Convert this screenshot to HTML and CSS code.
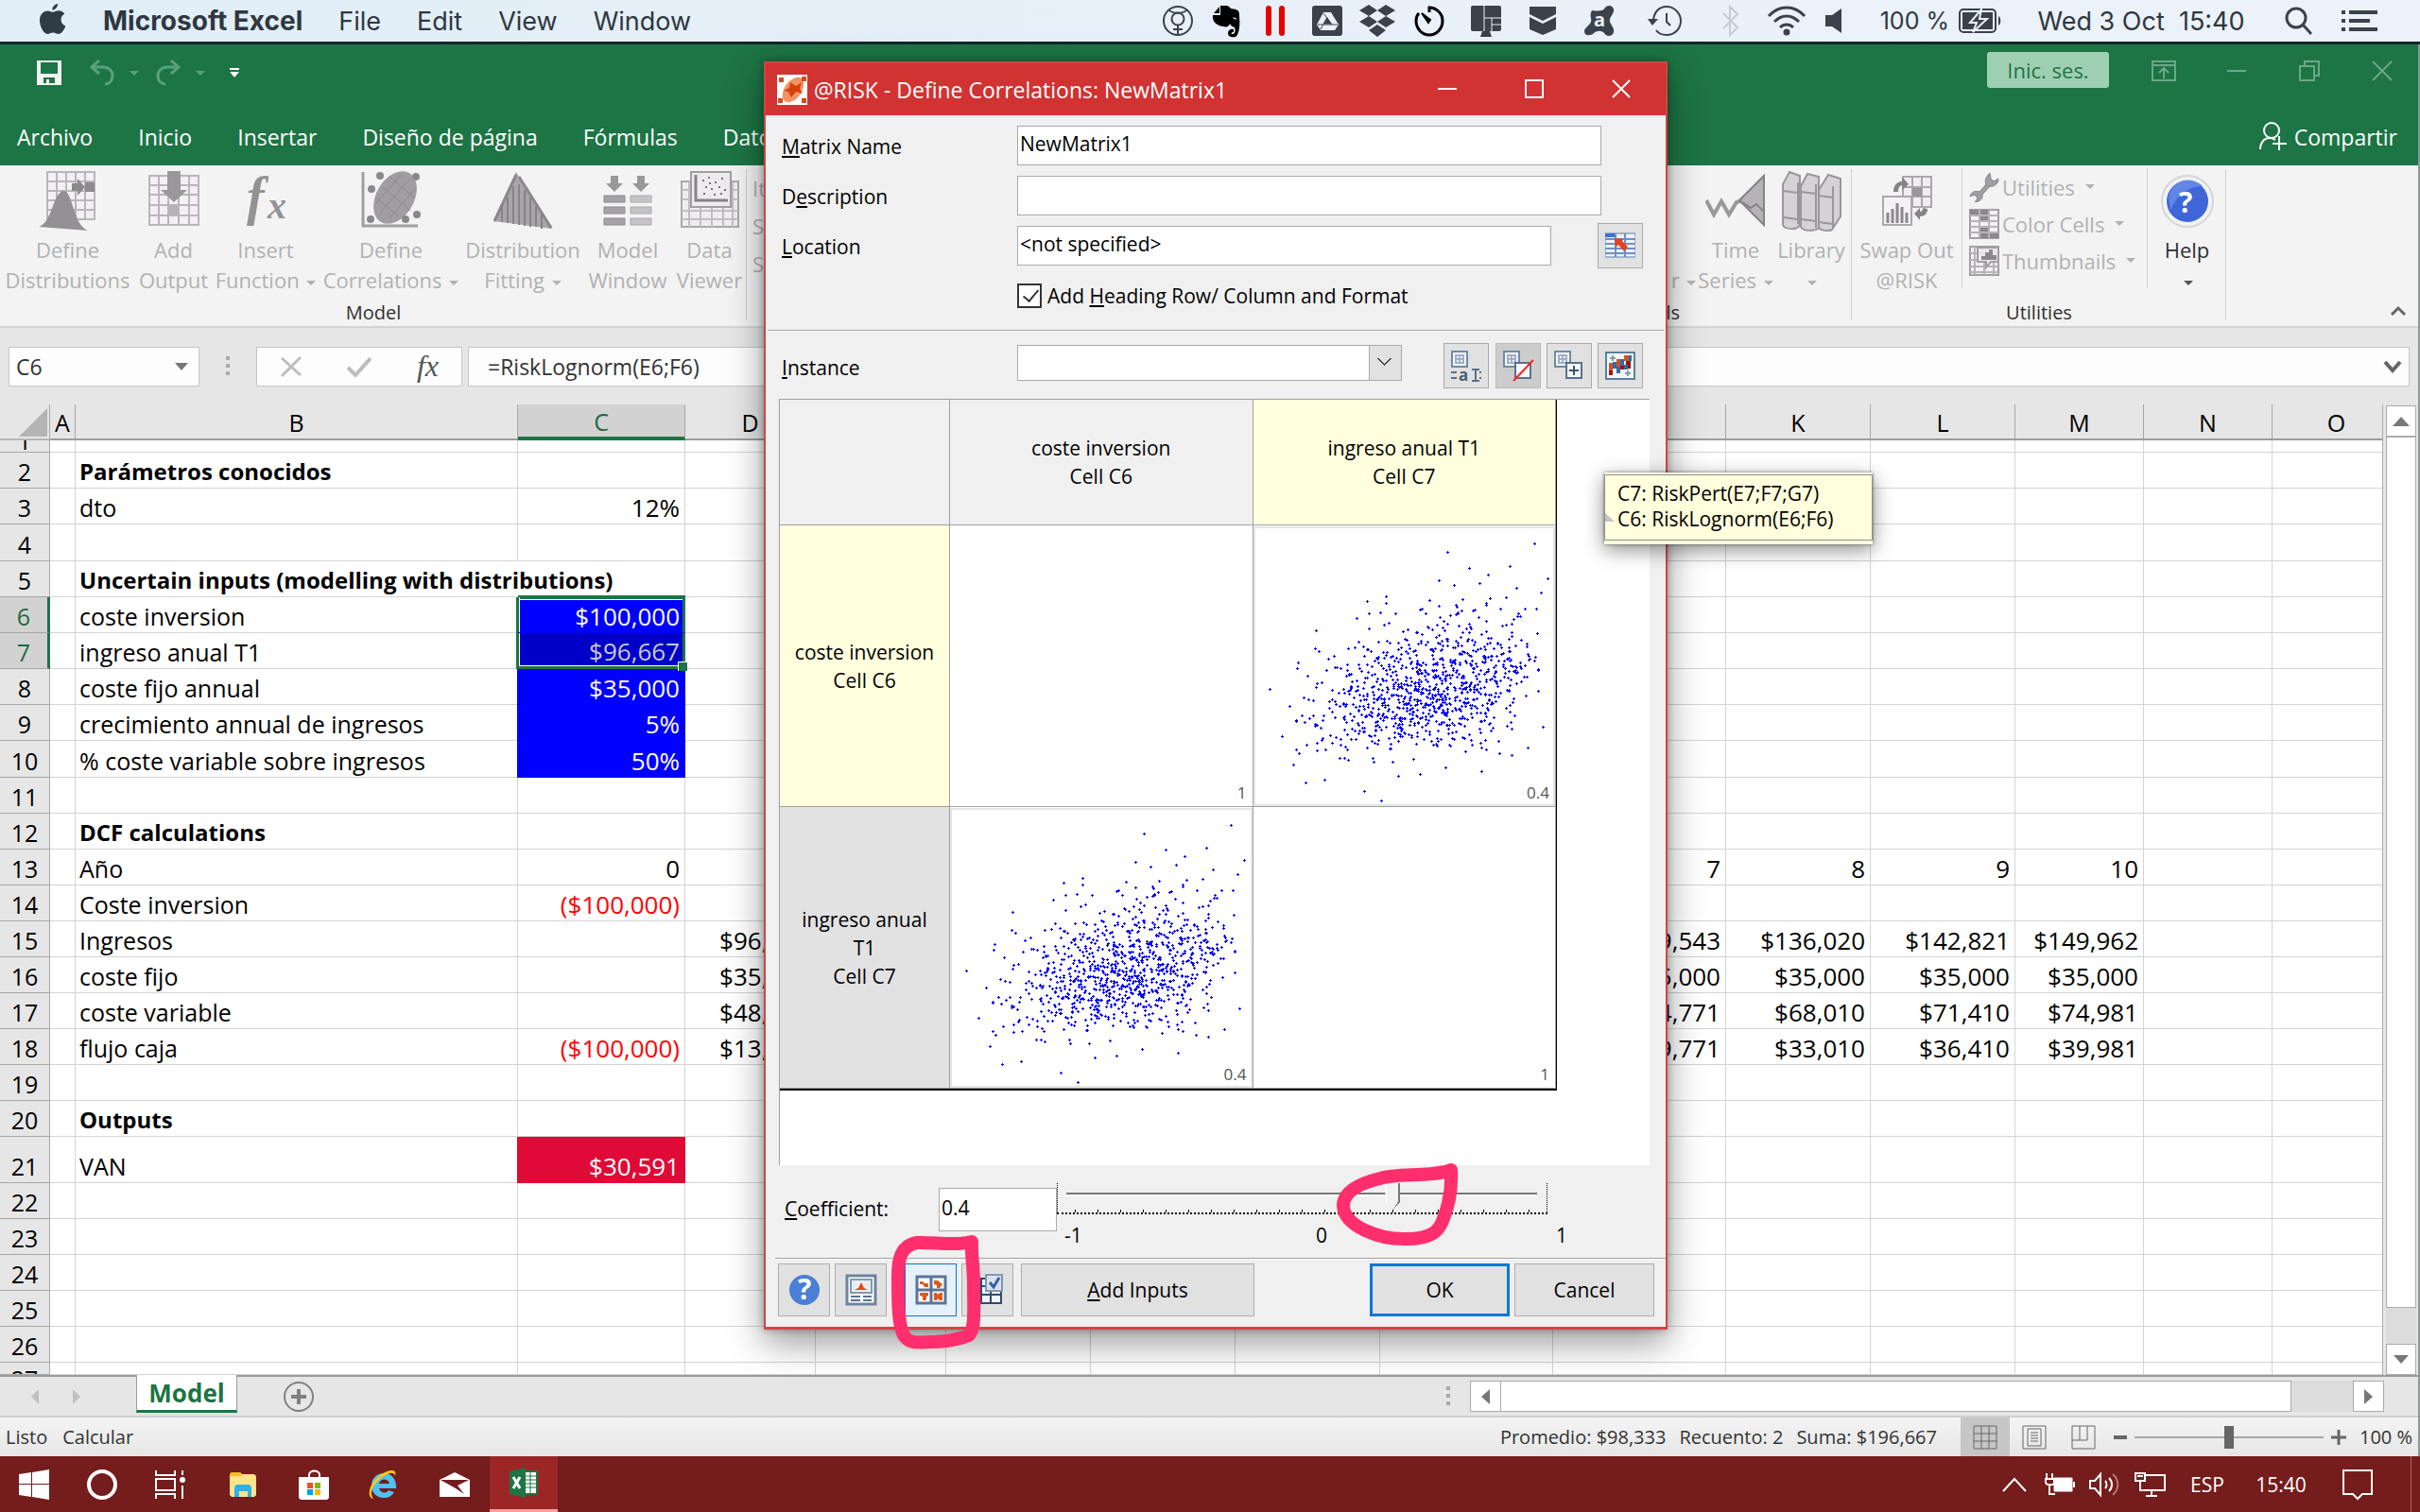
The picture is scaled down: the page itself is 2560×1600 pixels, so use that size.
FILE: index.html
```html
<!DOCTYPE html>
<html lang="es">
<head>
<meta charset="utf-8">
<title>Microsoft Excel</title>
<link rel="stylesheet" href="styles.css">
</head>
<body>
<header class="menubar">
  <nav class="menus">
    <svg class="apple" width="28" height="34" viewBox="0 0 28 34"><path d="M19 1c.3 3-2.500 6.500-5.600 6.600C13 4.600 16 1.500 19 1zM14 9.800c1.500 0 3-1.600 6-1.600 2.600 0 5 1.400 6.300 3.400-5.600 3.300-4.600 10.800 1 13C25.500 29.500 23 33 20 33c-2.500 0-3.300-1.400-6-1.400S10.500 33 8.200 33C4 33 0 25 0 18.600 0 12 4 8.400 8.300 8.400c2.500 0 4.300 1.400 5.700 1.400z" fill="#2f3b45"/></svg>
    <b>Microsoft Excel</b><span>File</span><span>Edit</span><span>View</span><span>Window</span>
  </nav>
  <div class="extras">
    <svg width="34" height="34" viewBox="0 0 34 34" fill="none" stroke="#3a424b" stroke-width="2"><circle cx="17" cy="17" r="15"/><circle cx="17" cy="15" r="6.500"/><path d="M7 5c4 5 16 5 20 0M17 22v10M12 26h10"/></svg>
    <svg width="30" height="36" viewBox="0 0 30 36"><path d="M9 2h6c3 0 4 2 5 3 8 1 9 2 9 8 1 8 0 20-4 22-4 1-8 0-8-4 0-3 3-5 6-4v3c-3 0-3 2-1 2 3 0 3-5 2-7-3-1-4-2-5-4-1 3-3 4-7 3C4 23 0 18 1 12h8z" fill="#000"/><path d="M2 10l6-7v7z" fill="#000"/><path d="M22 15c2-1 4 0 4 2z" fill="#e8f0f8"/></svg>
    <svg width="22" height="34" viewBox="0 0 22 34"><rect x="1" y="1" width="6" height="32" rx="3" fill="#e60000"/><rect x="15" y="1" width="6" height="32" rx="3" fill="#e60000"/></svg>
    <svg width="32" height="34" viewBox="0 0 32 34"><rect y="1" width="32" height="32" rx="3" fill="#3a424b"/><path d="M12 8h8l8 13-4 6H9l-4-6z" fill="#e8f0f8"/><path d="M16 14l4 6h-7zM12 9l9 12M6 21h21M16 13L9 26" fill="#3a424b" stroke="#3a424b"/></svg>
    <svg width="38" height="34" viewBox="0 0 38 34" fill="#3a424b"><path d="M10 0l9 6-9 6-10-6zM28 0l10 6-10 6-9-6zM10 12l9 6-9 6-10-6zM28 12l10 6-10 6-9-6zM19 21l9 6-9 7-9-7z"/></svg>
    <svg width="32" height="34" viewBox="0 0 32 34" fill="none" stroke="#000" stroke-width="3"><path d="M16 8V3c7 0 14 6 14 14s-6 15-14 15S2 25 2 17c0-3 1-6 3-8"/><path d="M8 9l9 7-2 3z" fill="#000" stroke-width="2"/></svg>
    <svg width="32" height="34" viewBox="0 0 32 34" fill="#3a424b"><rect y="1" width="32" height="27" rx="2"/><path d="M12 28h8l2 6H10z"/><path d="M14 1v27M14 14h18M22 14v14M22 21h10" stroke="#e8f0f8"/></svg>
    <svg width="30" height="32" viewBox="0 0 30 32" fill="#3a424b"><path d="M1 1h28v8l-14 7L1 9zM1 12l14 7 14-7v13l-14 6-14-6z"/></svg>
    <svg width="34" height="34" viewBox="0 0 34 34"><path d="M9 6c8 1 12 1 14-3 3-4 10-2 9 4-1 4-5 7-4 11 1 3 5 7 4 11-1 5-8 5-10 1-3-3-8-3-12 1-4 2-9 2-9-3 0-4 5-5 7-10 1-4-2-6 1-12z" fill="#3a424b"/><text x="11" y="23" class="avast">a</text></svg>
    <svg width="38" height="34" viewBox="0 0 38 34" fill="none" stroke="#3a424b" stroke-width="2"><path d="M7 18C7 8 13 2 21 2s15 7 15 15-6 15-15 15c-5 0-9-2-11-5M21 9v9l4 4"/><path d="M1 15h11l-6 7z" fill="#3a424b" stroke="none"/></svg>
    <svg width="20" height="34" viewBox="0 0 20 34" fill="none" stroke="#c3cbd4" stroke-width="2"><path d="M2 9l15 15-8 8V2l8 8L2 25"/></svg>
    <svg width="42" height="32" viewBox="0 0 42 32" fill="none" stroke="#3a424b" stroke-width="3"><path d="M2 11c11-12 27-12 38 0M8 17c8-8 18-8 26 0M14 23c4-4 10-4 14 0"/><circle cx="21" cy="28" r="2" fill="#3a424b"/></svg>
    <svg width="20" height="26" viewBox="0 0 20 26" fill="#3a424b"><path d="M1 7h7l10-7v26L8 19H1z"/></svg>
    <span class="pct">100 %</span>
    <svg width="46" height="26" viewBox="0 0 46 26"><rect x="1" y="1" width="38" height="24" rx="4" fill="none" stroke="#3a424b" stroke-width="2"/><rect x="4" y="4" width="32" height="18" fill="#3a424b"/><path d="M42 8c3 1 3 9 0 10z" fill="#3a424b"/><path d="M24 1L12 15h7l-4 10 15-14h-8z" fill="#3a424b" stroke="#e8f0f8" stroke-width="2"/></svg>
    <span class="clock">Wed 3 Oct&nbsp; 15:40</span>
    <svg width="32" height="32" viewBox="0 0 32 32" fill="none" stroke="#3a424b" stroke-width="3"><circle cx="13" cy="13" r="10"/><path d="M20 20l9 10"/></svg>
    <svg width="38" height="24" viewBox="0 0 38 24" stroke="#3a424b" stroke-width="4"><path d="M0 3h4M8 3h30M0 12h4M8 12h22M0 21h4M8 21h30"/></svg>
  </div>
</header>

<main class="excel">
  <div class="titlebar">
    <div class="qat">
      <svg width="26" height="26" viewBox="0 0 26 26"><path d="M0 0h26v26H0zm4 2v12h18V2zm3 16v6h3v-4h3v4h6v-6z" fill="#f0f5f2" fill-rule="evenodd"/></svg>
      <svg width="52" height="28" viewBox="0 0 52 28" fill="none" stroke="#57a17b" stroke-width="3"><path d="M10 1L2 8l8 7M3 8h11c6 0 10 4 10 9 0 6-4 9-8 9"/><path d="M42 12h10l-5 5z" fill="#57a17b" stroke="none"/></svg>
      <svg width="52" height="28" viewBox="0 0 52 28" fill="none" stroke="#57a17b" stroke-width="3"><path d="M16 1l8 7-8 7M23 8H12C6 8 2 12 2 17c0 6 4 9 8 9"/><path d="M42 12h10l-5 5z" fill="#57a17b" stroke="none"/></svg>
      <svg width="10" height="12" viewBox="0 0 10 12" fill="#fff"><path d="M0 1h10v2H0zM0 5h10l-5 6z"/></svg>
    </div>
    <button class="signin">Inic. ses.</button>
    <div class="winbtns">
      <svg width="26" height="22" viewBox="0 0 26 22" fill="none" stroke="#6ba788" stroke-width="2"><path d="M1 1h24v20H1zM1 5h24M13 19V9M8 13l5-5 5 5"/></svg>
      <svg width="20" height="22" viewBox="0 0 20 22"><path d="M0 11h20" stroke="#6ba788" stroke-width="2"/></svg>
      <svg width="22" height="22" viewBox="0 0 22 22" fill="none" stroke="#6ba788" stroke-width="2"><path d="M1 6h15v15H1zM6 6V1h15v15h-5"/></svg>
      <svg width="22" height="22" viewBox="0 0 22 22"><path d="M1 1l20 20M21 1L1 21" stroke="#6ba788" stroke-width="2"/></svg>
    </div>
  </div>
  <nav class="tabs">
    <a href="#">Archivo</a><a href="#">Inicio</a><a href="#">Insertar</a><a href="#">Diseño de página</a><a href="#">Fórmulas</a><a href="#">Datos</a>
    <a class="share" href="#"><svg width="30" height="32" viewBox="0 0 30 32" fill="none" stroke="#fff" stroke-width="2"><circle cx="13" cy="9" r="8"/><path d="M1 29c0-7 4-12 10-12 3 0 4 1 6 2M21 15v15M14 23h15"/></svg>Compartir</a>
  </nav>

  <section class="ribbon">
    <div class="group model">
      <div class="tools">
        <button class="big"><svg width="64" height="64" viewBox="0 0 64 64"><path d="M10 1h50v50H10z" fill="#f3eff4" stroke="#b9b5ba" stroke-width="2"/><path d="M20 1v50M30 1v50M40 1v50M50 1v50M10 11h50M10 21h50M10 31h50M10 41h50" stroke="#b9b5ba" stroke-width="2"/><path d="M36 13h6V8l8 9-8 9v-5h-6zM50 12h10v10H50z" fill="#8c8a8d"/><path d="M1 59c14-4 15-36 26-38 10-1 10 36 26 42z" fill="#939194"/></svg><span>Define<br>Distributions</span></button>
        <button class="big"><svg width="64" height="64" viewBox="0 0 64 64"><path d="M6 5h52v52H6z" fill="#f3eff4" stroke="#b9b5ba" stroke-width="2"/><path d="M16 5v52M26 5v52M37 5v52M48 5v52M6 15h52M6 25h52M6 36h52M6 47h52" stroke="#b9b5ba" stroke-width="2"/><path d="M25 0h14v20h7L32 33 18 20h7z" fill="#9a989b"/><path d="M27 37h10v9H27z" fill="#b5b3b6"/></svg><span>Add<br>Output</span></button>
        <button class="big"><svg width="64" height="64" viewBox="0 0 64 64"><text x="12" y="46" class="fx-big">f</text><text x="34" y="50" class="fx-mid">x</text></svg><span>Insert<br>Function <i class="dd"></i></span></button>
        <button class="big"><svg width="64" height="64" viewBox="0 0 64 64"><path d="M2 1v57h58" fill="none" stroke="#a09ea1" stroke-width="3"/><ellipse cx="36" cy="28" rx="20" ry="30" transform="rotate(30 36 28)" fill="#a09ea1"/><path d="M22 16l30 26M30 6l26 22M16 28l24 20M52 8L20 44M58 18L30 50M42 4L16 34" stroke="#8a888b" stroke-width="1"/><g fill="#8a888b"><circle cx="20" cy="5" r="4"/><circle cx="11" cy="19" r="4"/><circle cx="10" cy="51" r="4"/><circle cx="47" cy="51" r="4"/><circle cx="59" cy="46" r="4"/><circle cx="58" cy="6" r="4"/></g></svg><span>Define<br>Correlations <i class="dd"></i></span></button>
        <button class="big"><svg width="64" height="64" viewBox="0 0 64 64"><path d="M25 1L1 53l62 8L35 18z" fill="#a8a6a9"/><path d="M25 4L2 53M28 6l34 54" stroke="#8a888b" stroke-width="3"/><path d="M10 36v18M16 28v27M22 16v40M28 14v43M34 20v38M40 28v31M46 38v21M52 46v15" stroke="#858386" stroke-width="2"/></svg><span>Distribution<br>Fitting <i class="dd"></i></span></button>
        <button class="big"><svg width="64" height="64" viewBox="0 0 64 64"><path d="M14 5h8v8h5L18 22 9 13h5zM42 5h8v8h5l-9 9-9-9h5z" fill="#99979a"/><g fill="#a5a3a6" stroke="#8a888b"><path d="M7 26h22v7H7zM7 38h22v7H7zM7 50h22v7H7z"/></g><g fill="#c5c3c6" stroke="#aaa8ab"><path d="M35 26h22v7H35zM35 38h22v7H35zM35 50h22v7H35z"/></g></svg><span>Model<br>Window</span></button>
        <button class="big"><svg width="64" height="64" viewBox="0 0 64 64"><path d="M2 11h60v48H2z" fill="#f0edf1" stroke="#aaa8ab" stroke-width="2"/><path d="M10 11v48M22 38v21M34 38v21M46 38v21M56 11v48M2 20h60M2 30h60M2 42h60M2 51h60" stroke="#c0bec1" stroke-width="2"/><path d="M12 1h42v37H12z" fill="#eeebef" stroke="#a09ea1" stroke-width="2"/><path d="M17 4v27h34" fill="none" stroke="#858386" stroke-width="3"/><path d="M24 10h2M30 7h2M37 12h2M44 8h2M27 17h2M33 19h2M41 17h2M47 20h2M25 24h2M36 25h2M31 13h2M43 24h2" stroke="#757376" stroke-width="2"/></svg><span>Data<br>Viewer</span></button>
      </div>
      <p>Model</p>
    </div>
    <div class="group sims"><span>It</span><span>S</span><span>S</span></div>
    <div class="group analysis">
      <div class="tools">
        <button class="big"><svg width="10" height="64"></svg><span><br>r <i class="dd"></i></span></button>
        <button class="big"><svg width="64" height="64" viewBox="0 0 64 64"><path d="M1 31l8 15 8-14 8 14 8-13 6-2" fill="none" stroke="#9a989b" stroke-width="4"/><path d="M36 31L62 5v52z" fill="#b5b3b6" stroke="#858386" stroke-width="2"/><path d="M36 31l12 8 6-4 8 8" fill="none" stroke="#858386" stroke-width="2"/></svg><span>Time<br>Series <i class="dd"></i></span></button>
        <button class="big"><svg width="64" height="64" viewBox="0 0 64 64" fill="#d5d2d6" stroke="#99979a" stroke-width="2"><path d="M2 14L9 1l11 4v52c-3 6-16 5-18 0z"/><path d="M21 16l7-13 12 3v54c-3 4-17 4-19-1z"/><path d="M40 20L50 4l13 4v40L54 62c-4 2-12 1-14-2z"/><path d="M2 21l16 2M2 49l16 2M21 22l17 2M21 51l17 2M40 26l15 2M40 54l15 2M55 16v44M18 12v44M37 14v46" fill="none"/></svg><span>Library<br><i class="dd"></i></span></button>
      </div>
      <p>Tools</p>
    </div>
    <div class="group utils">
      <div class="tools">
        <button class="big"><svg width="64" height="64" viewBox="0 0 64 64"><path d="M28 6h30v32H28z" fill="#f0edf1" stroke="#aaa8ab" stroke-width="2"/><path d="M38 6v32M48 6v32M28 17h30M28 27h30" stroke="#aaa8ab" stroke-width="2"/><path d="M38 18h10v9H38z" fill="#99979a"/><path d="M7 27h30v30H7z" fill="#f5f2f6" stroke="#aaa8ab" stroke-width="2"/><path d="M12 44v11M17 40v15M22 34v21M27 38v17M32 44v11" stroke="#8a888b" stroke-width="3"/><path d="M18 22c0-7 4-11 9-11V6l7 8-7 6v-5c-3 0-4 4-4 7zM54 40c0 6-4 8-8 8v4l-6-7 6-6v4c2 0 3-1 3-4z" fill="#858386"/></svg><span>Swap Out<br>@RISK</span></button>
        <ul class="list">
          <li><svg width="32" height="32" viewBox="0 0 32 32"><path d="M22 1c-4 4-6 8-4 12l-7 8c-5-2-9 1-10 5l5-2 3 4-3 4c5 0 9-4 8-8l8-9c4 1 9-2 9-8l-5 3-3-3z" fill="#a09ea1" stroke="#858386"/></svg>Utilities <i class="dd"></i></li>
          <li><svg width="32" height="32" viewBox="0 0 32 32"><path d="M1 1h30v30H1z" fill="#f3f0f4" stroke="#a09ea1" stroke-width="2"/><path d="M1 1h19v5H1zM11 6h9v6h-9zM11 18h9v6h-9zM11 25h20v6H11z" fill="#8a888b"/><path d="M11 1v30M21 1v30M1 7h30M1 13h30M1 19h30M1 25h30" stroke="#b5b3b6" stroke-width="2"/></svg>Color Cells <i class="dd"></i></li>
          <li><svg width="32" height="32" viewBox="0 0 32 32"><path d="M1 1h30v30H1z" fill="#f3f0f4" stroke="#a09ea1" stroke-width="2"/><path d="M6 1v30M16 1v30M26 1v30M1 8h30M1 15h30M1 22h30M1 28h30" stroke="#b5b3b6" stroke-width="2"/><path d="M9 2h22v15h-8l-5 6v-6H9z" fill="#eae7eb" stroke="#a09ea1" stroke-width="2"/><path d="M13 15v-4h4V7h4V4h4v6h4v5z" fill="#8a888b"/></svg>Thumbnails <i class="dd"></i></li>
        </ul>
        <button class="big help"><svg width="64" height="64" viewBox="0 0 64 64"><circle cx="32" cy="32" r="27" fill="#f2f2f4" stroke="#d5d5d8" stroke-width="2"/><circle cx="32" cy="32" r="22" fill="#3f66d8"/><path d="M12 28a21 21 0 0 1 36-12c-12 0-26 6-34 26z" fill="#6286e6"/><text x="23" y="44" class="q">?</text></svg><span>Help<br><i class="dd"></i></span></button>
      </div>
      <p>Utilities</p>
    </div>
    <div class="collapse"><svg width="18" height="12" viewBox="0 0 18 12"><path d="M2 10l7-7 7 7" fill="none" stroke="#666" stroke-width="3"/></svg></div>
  </section>

  <section class="fbar">
    <div class="namebox"><input aria-label="Cuadro de nombres" value="C6"><svg width="14" height="8" viewBox="0 0 14 8"><path d="M0 0h14L7 8z" fill="#777"/></svg></div>
    <svg class="grip" width="4" height="22" viewBox="0 0 4 22" fill="#aaa"><path d="M0 0h4v4H0zM0 8h4v4H0zM0 16h4v4H0z"/></svg>
    <div class="fbtns">
      <svg width="24" height="22" viewBox="0 0 24 22"><path d="M2 2l20 18M22 1L2 21" stroke="#bdbdbd" stroke-width="3"/></svg>
      <svg width="26" height="22" viewBox="0 0 26 22"><path d="M1 12l8 8L25 2" fill="none" stroke="#bdbdbd" stroke-width="4"/></svg>
      <em>fx</em>
    </div>
    <div class="formula"><input aria-label="Barra de fórmulas" value="=RiskLognorm(E6;F6)"><svg width="20" height="14" viewBox="0 0 20 14"><path d="M2 2l8 9 8-9" fill="none" stroke="#666" stroke-width="4"/></svg></div>
  </section>

  <section class="sheet">
    <div class="cells">
      <table>
        <colgroup><col class="w53"><col class="w27"><col class="w468"><col class="w177"><col class="w138"><col class="w138"><col class="w153"><col class="w153"><col class="w153"><col class="w183"><col class="w183"><col class="w153"><col class="w153"><col class="w136"><col class="w136"><col></colgroup>
        <thead><tr><th><svg class="corner" width="32" height="30" viewBox="0 0 32 30"><path d="M31 0v30H1z" fill="#b4b4b4"/></svg></th><th>A</th><th>B</th><th class="on">C</th><th>D</th><th></th><th></th><th></th><th></th><th></th><th></th><th>K</th><th>L</th><th>M</th><th>N</th><th>O</th></tr></thead>
        <tbody>
        <tr class="first"><th><div class="cut bottom">1</div></th><td><td><td> <td><td><td><td><td><td> <td><td><td><td> <td><td></tr>
        <tr><th>2</th><td><td class="t b">Parámetros conocidos<td> <td><td><td><td><td><td> <td><td><td><td> <td><td></tr>
        <tr><th>3</th><td><td class="t">dto<td>12% <td><td><td><td><td><td> <td><td><td><td> <td><td></tr>
        <tr class="h39"><th>4</th><td><td><td> <td><td><td><td><td><td> <td><td><td><td> <td><td></tr>
        <tr><th>5</th><td><td class="t b over">Uncertain inputs (modelling with distributions)<td> <td><td><td><td><td><td> <td><td><td><td> <td><td></tr>
        <tr><th class="on">6</th><td><td class="t">coste inversion<td class="in s1">$100,000 <td><td><td><td><td><td> <td><td><td><td> <td><td></tr>
        <tr><th class="on">7</th><td><td class="t">ingreso anual T1<td class="in s2">$96,667 <td><td><td><td><td><td> <td><td><td><td> <td><td></tr>
        <tr><th>8</th><td><td class="t">coste fijo annual<td class="in">$35,000 <td><td><td><td><td><td> <td><td><td><td> <td><td></tr>
        <tr><th>9</th><td><td class="t">crecimiento annual de ingresos<td class="in">5% <td><td><td><td><td><td> <td><td><td><td> <td><td></tr>
        <tr class="h39"><th>10</th><td><td class="t">% coste variable sobre ingresos<td class="in">50% <td><td><td><td><td><td> <td><td><td><td> <td><td></tr>
        <tr><th>11</th><td><td><td> <td><td><td><td><td><td> <td><td><td><td> <td><td></tr>
        <tr><th>12</th><td><td class="t b">DCF calculations<td> <td><td><td><td><td><td> <td><td><td><td> <td><td></tr>
        <tr><th>13</th><td><td class="t">Año<td>0 <td><td><td><td><td><td> <td>7<td>8<td>9<td>10 <td><td></tr>
        <tr><th>14</th><td><td class="t">Coste inversion<td class="neg">($100,000) <td><td><td><td><td><td> <td><td><td><td> <td><td></tr>
        <tr><th>15</th><td><td class="t">Ingresos<td> <td>$96,667<td><td><td><td><td> <td>$129,543<td>$136,020<td>$142,821<td>$149,962 <td><td></tr>
        <tr><th>16</th><td><td class="t">coste fijo<td> <td>$35,000<td><td><td><td><td> <td>$35,000<td>$35,000<td>$35,000<td>$35,000 <td><td></tr>
        <tr><th>17</th><td><td class="t">coste variable<td> <td>$48,333<td><td><td><td><td> <td>$64,771<td>$68,010<td>$71,410<td>$74,981 <td><td></tr>
        <tr><th>18</th><td><td class="t">flujo caja<td class="neg">($100,000) <td>$13,333<td><td><td><td><td> <td>$29,771<td>$33,010<td>$36,410<td>$39,981 <td><td></tr>
        <tr><th>19</th><td><td><td> <td><td><td><td><td><td> <td><td><td><td> <td><td></tr>
        <tr><th>20</th><td><td class="t b">Outputs<td> <td><td><td><td><td><td> <td><td><td><td> <td><td></tr>
        <tr class="h49"><th>21</th><td><td class="t">VAN<td class="out">$30,591 <td><td><td><td><td><td> <td><td><td><td> <td><td></tr>
        <tr><th>22</th><td><td><td> <td><td><td><td><td><td> <td><td><td><td> <td><td></tr>
        <tr><th>23</th><td><td><td> <td><td><td><td><td><td> <td><td><td><td> <td><td></tr>
        <tr><th>24</th><td><td><td> <td><td><td><td><td><td> <td><td><td><td> <td><td></tr>
        <tr><th>25</th><td><td><td> <td><td><td><td><td><td> <td><td><td><td> <td><td></tr>
        <tr><th>26</th><td><td><td> <td><td><td><td><td><td> <td><td><td><td> <td><td></tr>
        <tr class="last"><th><div class="cut">27</div></th><td><td><td> <td><td><td><td><td><td> <td><td><td><td> <td><td></tr>
        </tbody>
      </table>
    </div>
    <div class="vscroll">
      <button aria-label="Arriba"><svg width="18" height="10" viewBox="0 0 18 10"><path d="M0 10h18L9 0z" fill="#777"/></svg></button>
      <div class="thumb"></div><div class="track"></div>
      <button aria-label="Abajo"><svg width="16" height="9" viewBox="0 0 16 9"><path d="M0 0h16L8 9z" fill="#777"/></svg></button>
    </div>
  </section>

  <section class="sheetbar">
    <svg class="nav" width="52" height="16" viewBox="0 0 52 16" fill="#c0c0c0"><path d="M8 0v16L0 8zM44 0v16l8-8z"/></svg>
    <button class="sheettab">Model</button>
    <button class="plus" aria-label="Nueva hoja"><svg width="34" height="34" viewBox="0 0 34 34" fill="none" stroke="#808080"><circle cx="17" cy="17" r="15" stroke-width="2"/><path d="M17 9v16M9 17h16" stroke-width="4"/></svg></button>
    <svg class="grip" width="4" height="22" viewBox="0 0 4 22" fill="#aaa"><path d="M0 0h4v4H0zM0 8h4v4H0zM0 16h4v4H0z"/></svg>
    <div class="hscroll">
      <button aria-label="Izquierda"><svg width="9" height="16" viewBox="0 0 9 16"><path d="M9 0v16L0 8z" fill="#777"/></svg></button>
      <div class="thumb"></div><div class="track"></div>
      <button aria-label="Derecha"><svg width="9" height="16" viewBox="0 0 9 16"><path d="M0 0v16l9-8z" fill="#777"/></svg></button>
    </div>
  </section>

  <footer class="status">
    <span>Listo</span><span>Calcular</span>
    <span class="stats"><span>Promedio: $98,333</span><span>Recuento: 2</span><span>Suma: $196,667</span></span>
    <div class="views">
      <button class="cur" aria-label="Normal"><svg width="26" height="26" viewBox="0 0 26 26" fill="none" stroke="#666"><path d="M1 1h24v24H1zM9 1v24M17 1v24M1 9h24M1 17h24"/></svg></button>
      <button aria-label="Diseño de página"><svg width="26" height="26" viewBox="0 0 26 26" fill="none" stroke="#666"><path d="M1 1h24v24H1zM6 4h14v18H6zM9 8h8M9 11h8M9 14h8M9 17h8"/></svg></button>
      <button aria-label="Saltos de página"><svg width="26" height="26" viewBox="0 0 26 26" fill="none" stroke="#666"><path d="M1 1h24v24H1zM1 16h16V1M9 1v15"/></svg></button>
    </div>
    <div class="zoom"><svg width="14" height="16" viewBox="0 0 14 16"><path d="M0 8h14" stroke="#666" stroke-width="4"/></svg><input type="range" aria-label="Zoom" min="0" max="100" value="50"><svg width="16" height="16" viewBox="0 0 16 16"><path d="M0 8h16M8 0v16" stroke="#666" stroke-width="3"/></svg></div>
    <span>100 %</span>
  </footer>
</main>

<footer class="taskbar">
  <div class="apps">
    <svg width="32" height="32" viewBox="0 0 32 32" fill="#fff"><path d="M0 5l13-2v12H0zM14 3l18-3v15H14zM0 16h13v13L0 27zM14 16h18v16l-18-3z"/></svg>
    <svg width="32" height="32" viewBox="0 0 32 32" fill="none"><circle cx="16" cy="16" r="14" stroke="#fff" stroke-width="4"/></svg>
    <svg width="32" height="32" viewBox="0 0 32 32" fill="none" stroke="#fff" stroke-width="2"><path d="M1 1v5h20V1M1 10h20v12H1zM1 31v-5h20v5M29 1v5M29 17v14"/><circle cx="29" cy="11" r="2" fill="#fff"/></svg>
    <svg width="28" height="26" viewBox="0 0 28 26"><path d="M0 2l2-2h9l2 2h13l2 2v20l-2 2H2l-2-2z" fill="#ffe48a"/><path d="M0 4V2l2-2h9l2 4z" fill="#f7be1f"/><path d="M5 26V16l2-3h14l2 3v10h-4v-6H10v6z" fill="#30b0ea"/></svg>
    <svg width="32" height="32" viewBox="0 0 32 32"><path d="M11 10V6c0-6 11-6 11 0v4" fill="none" stroke="#fff" stroke-width="2"/><path d="M0 8h32v22l-2 2H2l-2-2z" fill="#fff"/><path d="M9 14h6v6H9z" fill="#f25022"/><path d="M17 14h6v6h-6z" fill="#7fba00"/><path d="M9 21h6v6H9z" fill="#00a4ef"/><path d="M17 21h6v6h-6z" fill="#ffb900"/></svg>
    <svg width="32" height="32" viewBox="0 0 32 32"><path d="M28 24c-3 5-7 6-11 6C9 30 4 24 4 17S9 4 17 4s13 6 13 14v2H12c1 5 8 6 10 2zM12 15h11c-1-6-10-6-11 0z" fill="#4cc2f1" fill-rule="evenodd"/><path d="M6 31c-4-1-5-4-4-9C4 12 15 2 25 1c4 0 5 2 4 6-1-4-4-4-8-2C12 9 4 18 4 25c0 3 1 4 2 6z" fill="#f8c61e"/></svg>
    <svg width="32" height="28" viewBox="0 0 32 28"><path d="M0 9l16-8 16 8v18H0z" fill="#fff"/><path d="M1 9h30l-12 6 7 9-9-6z" fill="#751c1c"/></svg>
    <div class="active"><svg width="32" height="32" viewBox="0 0 32 32"><path d="M15 4h15v24H15z" fill="#fff" stroke="#1d7444" stroke-width="2"/><path d="M17 9h12M17 13h12M17 17h12M17 21h12M23 5v22" stroke="#1d7444"/><path d="M1 4l17-4v32L1 28z" fill="#1d7444"/><path d="M5 10l7 12M12 10L5 22" stroke="#fff" stroke-width="3"/></svg></div>
  </div>
  <div class="tray">
    <svg width="28" height="18" viewBox="0 0 28 18"><path d="M2 16L14 3l12 13" fill="none" stroke="#fff" stroke-width="2"/></svg>
    <svg width="32" height="26" viewBox="0 0 32 26"><path d="M10 6h19v14H10z" fill="#fff" stroke="#fff"/><path d="M30 10h2v6h-2z" fill="#fff"/><path d="M2 1v5M8 1v5M0 7h10v4c0 3-8 3-9 0V7M5 13v10h6" fill="none" stroke="#fff" stroke-width="2"/></svg>
    <svg width="34" height="28" viewBox="0 0 34 28" fill="none" stroke="#fff" stroke-width="2"><path d="M1 10h5l6-7v22l-6-7H1zM17 10c2 2 2 6 0 8M21 7c4 4 4 10 0 14"/><path d="M25 3c7 6 7 16 0 22" stroke="#b87777"/></svg>
    <svg width="34" height="28" viewBox="0 0 34 28" fill="none" stroke="#fff" stroke-width="2"><path d="M10 4h22v16H6v-8M18 20v6M12 26h12M1 2h10v8H1zM6 10v4M3 5h6"/></svg>
    <span>ESP</span><span>15:40</span>
    <svg width="34" height="34" viewBox="0 0 34 34"><path d="M2 2h30v25h-10l-5 5-5-5H2z" fill="none" stroke="#fff" stroke-width="2"/></svg>
    <i class="peek"></i>
  </div>
</footer>

<section class="dialog" role="dialog" aria-label="Define Correlations">
  <div class="caption">
    <svg width="32" height="32" viewBox="0 0 32 32"><path d="M0 0h32v32H0z" fill="#fff"/><ellipse cx="17" cy="16" rx="9" ry="15" transform="rotate(35 17 16)" fill="#f29365"/><path d="M14 8l6 4 6-4-2 7 3 5-7-2-5 6-3-6-5-1 6-3z" fill="#d8400c"/><path d="M2 3h5v5H2zM26 2h5v5h-5zM1 25h5v5H1zM26 25h5v5h-5z" fill="#d44a20"/></svg>
    <h1>@RISK - Define Correlations: NewMatrix1</h1>
    <div class="capbtns">
      <svg width="20" height="20" viewBox="0 0 20 20"><path d="M0 10h20" stroke="#fff" stroke-width="2"/></svg>
      <svg width="20" height="20" viewBox="0 0 20 20"><path d="M1 1h18v18H1z" fill="none" stroke="#fff" stroke-width="2"/></svg>
      <svg width="20" height="20" viewBox="0 0 20 20"><path d="M1 1l18 18M19 1L1 19" stroke="#fff" stroke-width="2"/></svg>
    </div>
  </div>
  <form class="fields">
    <label for="mname"><u>M</u>atrix Name</label><input id="mname" class="wide" value="NewMatrix1">
    <label for="desc">D<u>e</u>scription</label><input id="desc" class="wide">
    <label for="loc"><u>L</u>ocation</label>
    <div class="locrow"><input id="loc" value="&lt;not specified&gt;"><button type="button" class="tool" aria-label="Select range"><svg width="32" height="28" viewBox="0 0 32 28"><path d="M0 1h32v25H0z" fill="#eef3fb" stroke="#5c7fb8"/><path d="M0 1h12v4H0z" fill="#3a70d8"/><path d="M0 7h32M0 12h32M0 17h32M0 22h32M11 1v25M21 1v25" stroke="#6f8fc4" stroke-width="2"/><path d="M10 6l9 1-1 2 6 6-4 5-6-7-3 3z" fill="#e2431e"/></svg></button></div>
    <span></span>
    <div class="check"><input type="checkbox" id="head" checked><label for="head">Add <u>H</u>eading Row/ Column and Format</label></div>
  </form>
  <div class="instance">
    <label for="inst"><u>I</u>nstance</label>
    <select id="inst"><option></option></select>
    <div class="toolset">
      <button class="tool" aria-label="Rename"><svg width="34" height="34" viewBox="0 0 34 34"><path d="M2 2h16v16H2z" fill="#f4f7fb" stroke="#7089a8" stroke-width="2"/><path d="M6 6h8v8H6zM10 6v8M6 10h8" fill="none" stroke="#9fb0c6" stroke-width="2"/><path d="M1 24h6M1 30h6M31 24h2M31 30h2M23 21h8M23 33h8M27 21v12" stroke="#5a708a" stroke-width="2"/><text x="9" y="33" class="glyph">a</text></svg></button>
      <button class="tool off" aria-label="Delete"><svg width="34" height="34" viewBox="0 0 34 34"><path d="M2 2h16v16H2z" fill="#f4f7fb" stroke="#7089a8" stroke-width="2"/><path d="M6 6h8v8H6zM10 6v8M6 10h8" fill="none" stroke="#9fb0c6" stroke-width="2"/><path d="M14 14h16v16H14z" fill="#f4f7fb" stroke="#5a7090" stroke-width="2"/><path d="M12 33l21-22" stroke="#f22" stroke-width="2"/></svg></button>
      <button class="tool" aria-label="Add"><svg width="34" height="34" viewBox="0 0 34 34"><path d="M2 2h16v16H2z" fill="#f4f7fb" stroke="#7089a8" stroke-width="2"/><path d="M6 6h8v8H6zM10 6v8M6 10h8" fill="none" stroke="#9fb0c6" stroke-width="2"/><path d="M14 14h16v16H14z" fill="#f4f7fb" stroke="#5a7090" stroke-width="2"/><path d="M22 17v10M17 22h10" stroke="#3c5470" stroke-width="2"/></svg></button>
      <button class="tool" aria-label="Heat map"><svg width="32" height="30" viewBox="0 0 32 30"><path d="M1 1h30v28H1z" fill="#f4f7fb" stroke="#5a7fa0" stroke-width="2"/><path d="M4 12h4v8H4zM12 8h4v8h-4zM20 4h5v6h-5z" fill="#d9501e"/><path d="M8 11h4v7H8zM16 8h4v7h-4zM25 4h3v6h-3zM12 16h4v7h-4zM20 14h4v5h-4z" fill="#2a6cae"/><path d="M4 20h4v5H4zM16 15h4v4h-4zM22 10h5v8h-3v-4h-2z" fill="#9c1616"/><path d="M8 4v6M5 7h6M24 20v6M21 23h6" stroke="#8a9aa8" stroke-width="2"/></svg></button>
    </div>
  </div>
  <div class="matrix">
    <table>
      <tr><th></th><th>coste inversion<br>Cell C6</th><th class="hot">ingreso anual T1<br>Cell C7</th></tr>
      <tr><th class="hot">coste inversion<br>Cell C6</th><td><span>1</span></td><td><svg class="plot" viewBox="0 0 320 296"><path class="dots"/></svg><span>0.4</span></td></tr>
      <tr><th class="dim">ingreso anual<br>T1<br>Cell C7</th><td><svg class="plot" viewBox="0 0 320 296"><path class="dots"/></svg><span>0.4</span></td><td><span>1</span></td></tr>
    </table>
  </div>
  <div class="coef">
    <label for="coef"><u>C</u>oefficient:</label>
    <input id="coef" value="0.4">
    <div class="slide">
      <input type="range" aria-label="Coefficient slider" min="-1" max="1" step="0.1" value="0.4">
      <div class="scale"><span>-1</span><span>0</span><span>1</span></div>
    </div>
  </div>
  <div class="buttons">
    <button class="sq" aria-label="Help"><svg width="34" height="34" viewBox="0 0 34 34"><circle cx="17" cy="17" r="16" fill="#4a7fd6"/><text x="10" y="27" class="q">?</text></svg></button>
    <button class="sq" aria-label="Report"><svg width="34" height="34" viewBox="0 0 34 34"><path d="M2 2h30v30H2z" fill="#fff" stroke="#6d84a0" stroke-width="3"/><path d="M6 6h22v14H6z" fill="#e8eef5" stroke="#8298b0" stroke-width="2"/><path d="M10 17l4-2 3-6 3 6 4 2z" fill="#e04a10"/><path d="M6 24h10M19 24h9M6 28h10M19 28h9" stroke="#5a7090" stroke-width="2"/></svg></button>
    <button class="sq picked" aria-label="Scatter plots"><svg width="34" height="32" viewBox="0 0 34 32"><path d="M2 2h30v28H2zM17 2v28M2 16h30" fill="#fff" stroke="#5a7596" stroke-width="3"/><path d="M5 7h3l2 2h4v4h-4L8 10H5zM20 6h4l5 4-3 4h-3v-3l-3-1zM5 19h9v3l-2 1v4H8v-4l-3-1zM20 19h3l1 2 2-2h3v8h-3l-2-2-1 2h-3z" fill="#dd5a20"/></svg></button>
    <button class="sq" aria-label="Check"><svg width="34" height="34" viewBox="0 0 34 34"><path d="M1 5h30v26H1zM1 13h30M1 22h30M10 5v26M20 5v26" fill="#eef5fc" stroke="#33496a" stroke-width="2"/><path d="M15 1h17v17H15z" fill="#d8e2ee" stroke="#8298b0" stroke-width="2"/><path d="M19 9l4 5 6-10" fill="none" stroke="#3560a0" stroke-width="3"/></svg></button>
    <button class="add"><u>A</u>dd Inputs</button>
    <button class="ok">OK</button>
    <button class="cancel">Cancel</button>
  </div>
</section>

<aside class="tip"><div>C7: RiskPert(E7;F7;G7)<br>C6: RiskLognorm(E6;F6)</div></aside>

<svg class="ink" width="640" height="220" viewBox="930 1220 640 220" fill="none" stroke="#ff2f6e" stroke-width="14" stroke-linecap="round" stroke-linejoin="round"><path d="M1028 1314C1010 1319 988 1314 970 1315C953 1318 950 1332 950 1350C950 1375 950 1395 954 1408C958 1422 968 1421 985 1420C1000 1420 1015 1417 1025 1413C1032 1405 1030 1385 1030 1360C1030 1340 1027 1325 1028 1314"/><path d="M1535 1238C1515 1246 1480 1241 1460 1247C1435 1253 1421 1262 1421 1276C1422 1298 1460 1312 1488 1311C1515 1311 1522 1302 1526 1292C1533 1275 1536 1255 1535 1238"/></svg>
<script src="scatter.js"></script>
</body>
</html>
```
FILE: styles.css
```css
* { box-sizing: border-box; }
body { margin: 0; min-height: 100vh; display: flex; flex-direction: column; position: relative; overflow: hidden; background: #731c1b; font-family: "Open Sans", "Noto Sans", sans-serif; font-size: 22px; color: #000; }
svg { display: block; flex: none; }
button { font: inherit; color: inherit; margin: 0; padding: 0; border: 0; background: none; }
input { font: inherit; color: inherit; margin: 0; }
a { color: inherit; text-decoration: none; }
p, h1, ul { margin: 0; padding: 0; list-style: none; }

/* system menu bar */
.menubar { height: 47px; flex: none; display: flex; justify-content: space-between; padding: 0 30px 0 42px; background: linear-gradient(90deg, #e1eef7, #edf2f9); border-bottom: 3px solid #16242e; font-family: Inter, sans-serif; font-size: 27px; color: #2f3740; }
.menus { display: flex; align-items: center; gap: 38px; }
.menus b { font-size: 28px; }
.apple { margin-right: 1px; margin-bottom: 4px; }
.extras { display: grid; align-items: center; justify-items: center; white-space: nowrap; grid-template-columns: 52px 50px 54px 56px 50px 60px 60px 60px 60px 78px 62px 56px 44px 100px 66px 274px 60px 68px; }
.extras svg { margin-bottom: 1px; }
.pct { justify-self: end; font-size: 25px; }
.avast { font: bold 20px "Open Sans", sans-serif; fill: #e8f0f8; }

.excel { flex: 1; display: flex; flex-direction: column; background: #e6e6e6; border-right: 2px solid #8a9a94; }

/* green title and tabs */
.titlebar { height: 60px; flex: none; display: flex; align-items: center; background: #1d7444; color: #fff; }
.qat { display: flex; align-items: center; padding-left: 39px; margin-right: auto; }
.qat svg + svg { margin-left: 30px; }
.qat svg:nth-child(3) { margin-left: 18px; }
.qat svg:nth-child(4) { margin-left: 26px; }
.signin { width: 129px; height: 38px; margin: 0 19px 6px 0; border-radius: 3px; background: #9fcfb3; color: #1d7444; }
.winbtns { display: grid; grid-template-columns: repeat(4, 77px); justify-items: center; align-items: center; padding-bottom: 4px; }
.tabs { height: 68px; flex: none; display: flex; align-items: center; gap: 48px; padding: 8px 22px 0 18px; background: #1d7444; color: #fff; font-size: 23px; white-space: nowrap; }
.share { margin-left: auto; display: flex; align-items: center; gap: 7px; }

/* ribbon */
.ribbon { height: 172px; flex: none; display: flex; background: #f3f3f3; border-bottom: 2px solid #d4d4d4; color: #b1b1b1; }
.group { position: relative; display: flex; flex-direction: column; padding-top: 6px; }
.group::after { content: ""; position: absolute; right: 0; top: 4px; bottom: 6px; width: 1px; background: #d0d0d0; }
.group p { margin-top: auto; padding-bottom: 2px; text-align: center; font-size: 20px; line-height: 24px; color: #303030; }
.tools { display: grid; align-items: start; }
.big { display: flex; flex-direction: column; align-items: center; gap: 3px; line-height: 32px; white-space: nowrap; }
.dd { display: inline-block; vertical-align: middle; margin-left: 2px; border: 5px solid transparent; border-top-color: #b1b1b1; border-bottom: 0; }
.model .tools { grid-template-columns: 143px 81px 114px 151px 128px 94px 79px; }
.sims { padding: 4px 0 0 6px; line-height: 40px; width: 120px; }
.sims::after { display: none; }
.analysis { margin-left: auto; width: 196px; }
.analysis .tools { grid-template-columns: 36px 74px 86px; }
.analysis p { width: 14px; display: flex; justify-content: flex-end; }
.utils .tools { grid-template-columns: 116px 197px 83px; }
.list { height: 127px; margin-top: -3px; padding-left: 7px; border-left: 1px solid #d0d0d0; border-right: 1px solid #d0d0d0; }
.list li { display: flex; align-items: center; gap: 3px; height: 39px; white-space: pre; line-height: 32px; }
.help { color: #303030; }
.help .dd { border-top-color: #555; }
.q { font: bold 30px "Open Sans", sans-serif; fill: #fff; }
.fx-big { font: italic bold 56px "Liberation Serif", serif; fill: #949295; }
.fx-mid { font: italic bold 40px "Liberation Serif", serif; fill: #949295; }
.collapse { width: 203px; display: flex; align-items: flex-end; justify-content: flex-end; padding: 0 12px 10px 0; }

/* formula bar */
.fbar { height: 81px; flex: none; display: flex; align-items: center; padding: 0 9px; font-size: 23px; color: #333; }
.fbar input { border: 0; background: none; outline: 0; min-width: 0; flex: 1; padding: 0; }
.namebox, .fbtns, .formula { height: 42px; display: flex; align-items: center; background: #fdfdfd; border: 1px solid #c6c6c6; }
.namebox { width: 202px; padding: 0 11px 0 7px; }
.fbar .grip { margin: 0 28px; }
.fbtns { width: 218px; justify-content: space-between; padding: 0 24px; }
.fbtns em { font: italic 32px "Liberation Serif", serif; color: #555; }
.formula { flex: 1; margin-left: 6px; padding: 0 7px 0 20px; }

/* worksheet */
.sheet { flex: 1; display: flex; min-height: 0; }
.cells { flex: 1; overflow: hidden; background: #fff; }
.cells table { width: calc(100% + 20px); table-layout: fixed; border-collapse: separate; border-spacing: 0; font-size: 25px; line-height: 34px; white-space: nowrap; }
.w53 { width: 53px; } .w27 { width: 27px; } .w468 { width: 468px; } .w177 { width: 177px; } .w138 { width: 138px; } .w153 { width: 153px; } .w183 { width: 183px; } .w136 { width: 136px; }
.cells td, .cells th { height: 38px; padding: 0 5px; border: 0 solid #d4d4d4; border-width: 0 1px 1px 0; vertical-align: bottom; text-align: right; }
.cells td { font-size: 26px; }
.cells th { padding: 0; font-weight: 400; text-align: center; background: #e6e6e6; border-color: #a6a6a6; }
.cells thead th { height: 38px; border-bottom: 2px solid #9b9b9b; }
.cells thead th:first-child { border-bottom-color: #b5b5b5; }
.cells .on { background: #d2d2d2; color: #1d6a3e; }
.cells thead .on { border-bottom: 4px solid #1d7444; line-height: 32px; }
.cells tbody .on { border-right: 3px solid #1d7444; }
.corner { margin: 0 2px 2px 19px; }
.cells td.t { text-align: left; padding: 0 4px; font-size: 25px; }
.cells td.b { font-weight: 700; font-size: 24px; }
.cells td.over { border-right: 0; }
.cells .first > *, .cells .last > * { height: 13px; }
.cut { height: 12px; overflow: hidden; }
.cut.bottom { display: flex; align-items: flex-end; justify-content: center; line-height: 24px; }
.cells .h39 > * { height: 39px; }
.cells .h49 > * { height: 49px; }
.cells td.in { background: #00f; color: #fff; border-color: #00f; box-shadow: -1px 0 #00f; }
.cells td.s1 { box-shadow: inset 1px 0 #1d7444, inset 2px 0 #fff, inset 0 2px #1d7444, inset 0 3px #fff, -2px 0 #1d7444, 0 -2px #1d7444; border-right: 3px solid #1d7444; padding-right: 3px; }
.cells td.s2 { position: relative; background: #0000c8; color: #c8c8d8; box-shadow: inset 1px 0 #1d7444, inset 2px 0 #fff, inset 0 -1px #fff, -2px 0 #1d7444; border: solid #1d7444; border-width: 0 3px 3px 0; line-height: 32px; padding-right: 3px; }
.s2::after { content: ""; position: absolute; right: -5px; bottom: -5px; width: 9px; height: 9px; background: #1d7444; border: 1px solid #fff; border-width: 1px 0 0 1px; }
.cells td.out { background: #df0a36; color: #fff; border-color: #df0a36; box-shadow: -1px 0 #df0a36; }
.cells td.neg { color: #f00; }
.vscroll { width: 38px; padding: 1px 2px 0 3px; display: flex; flex-direction: column; border-left: 1px solid #ababab; }
.vscroll button, .hscroll button { display: flex; align-items: center; justify-content: center; background: #fff; border: 1px solid #ababab; flex: none; }
.vscroll button { height: 33px; }
.vscroll .thumb { flex: 923; background: #fff; border: 1px solid #ababab; }
.vscroll .track { flex: 38; background: #dcdcdc; }

.sheetbar { height: 43px; flex: none; display: flex; align-items: center; border-top: 2px solid #9b9b9b; }
.nav { margin: 0 59px 0 33px; }
.sheettab { align-self: flex-start; width: 107px; height: 40px; margin-top: -2px; background: #fff; border: 1px solid #9b9b9b; border-width: 0 1px 3px; border-bottom-color: #1d7444; color: #1d7444; font-size: 26px; font-weight: 700; line-height: 34px; }
.plus { margin-left: 48px; margin-right: auto; }
.sheetbar .grip { margin-right: 21px; }
.hscroll { width: 967px; height: 33px; margin-right: 36px; display: flex; }
.hscroll button { width: 33px; }
.hscroll .thumb { flex: 835; background: #fff; border: 1px solid #ababab; border-left: 0; }
.hscroll .track { flex: 65; background: #dcdcdc; }

.status { height: 43px; flex: none; display: flex; align-items: center; gap: 16px; padding: 0 6px; border-top: 2px solid #cfcfcf; background: linear-gradient(#f4f4f4, #e6e6e6); font-size: 20px; color: #333; white-space: nowrap; }
.stats { margin-left: auto; display: flex; gap: 14px; }
.views { align-self: stretch; display: flex; margin-left: 9px; }
.views button { width: 52px; display: flex; align-items: center; justify-content: center; }
.views .cur { background: #c6c6c6; }
.zoom { display: flex; align-items: center; gap: 8px; margin: 0 -2px 0 -10px; }
.zoom input { appearance: none; width: 200px; height: 26px; background: linear-gradient(#a6a6a6, #a6a6a6) center / 100% 2px no-repeat; }
.zoom input::-webkit-slider-thumb { appearance: none; width: 10px; height: 24px; background: #666; }

/* task bar */
.taskbar { height: 60px; flex: none; display: flex; justify-content: space-between; background: #751c1c; color: #fff; font-size: 21px; }
.apps, .tray { display: grid; align-items: center; justify-items: center; }
.apps { grid-template-columns: 72px 72px 72px 82px 68px 77px 75px 72px; }
.active { width: 100%; height: 60px; display: flex; align-items: center; justify-content: center; background: #9c2626; border-bottom: 4px solid #ff9f9f; }
.tray { grid-template-columns: 48px 48px 48px 48px 72px 84px 78px 27px; }
.peek { width: 10px; height: 60px; justify-self: end; border-left: 1px solid #a86a6a; }

/* correlations window */
.dialog { position: absolute; left: 808px; top: 65px; width: 956px; background: #f0f0f0; border: 2px solid #d24444; border-bottom-width: 3px; box-shadow: 0 14px 36px rgba(0,0,0,.4), 0 0 8px rgba(0,0,0,.3); font-size: 21px; }
.caption { height: 55px; display: flex; align-items: center; gap: 7px; padding-left: 12px; background: #d13232; color: #fff; }
.caption h1 { flex: 1; font-size: 23px; font-weight: 400; }
.capbtns { display: grid; grid-template-columns: repeat(3, 92px); justify-items: center; padding: 0 1px 1px 0; }
.fields { display: grid; grid-template-columns: 249px 1fr; row-gap: 11px; padding: 11px 24px 22px 17px; align-items: center; }
.fields > label { padding-top: 2px; }
.fields .wide { width: 618px; }
.fields input:not([type]), .coef > input { height: 42px; padding: 0 2px 4px; border: 1px solid #aaa; background: #fff; }
.locrow { display: flex; justify-content: space-between; align-items: center; height: 42px; }
.locrow input { width: 565px; }
.tool { width: 48px; height: 48px; display: flex; align-items: center; justify-content: center; background: #e1e1e1; border: 1px solid #aaa; }
.tool.off { background: #ccc; border-color: #bbb; }
.check { display: flex; align-items: center; gap: 6px; margin-top: 7px; }
.check input { appearance: none; width: 26px; height: 26px; border: 2px solid #333; background: #fff; position: relative; }
.check input::after { content: ""; position: absolute; left: 8px; top: 1px; width: 7px; height: 14px; border: solid #333; border-width: 0 2px 2px 0; transform: rotate(40deg); }
.instance { display: flex; align-items: center; margin: 0 2px; padding: 13px 22px 11px 15px; border-top: 1px solid #a0a0a0; box-shadow: inset 0 1px #fff; }
.instance label { width: 249px; padding-top: 4px; }
.instance select { appearance: none; width: 407px; height: 38px; margin-bottom: 6px; border: 1px solid #aaa; border-radius: 0; background: linear-gradient(45deg, transparent 50%, #444 50% 62%, transparent 62%) right 17px top 13px / 8px 8px no-repeat, linear-gradient(-45deg, transparent 50%, #444 50% 62%, transparent 62%) right 10px top 13px / 8px 8px no-repeat, linear-gradient(90deg, #aaa 1px, #e1e1e1 1px) right / 34px 100% no-repeat, #fff; }
.toolset { margin-left: auto; display: flex; gap: 6px; }
.toolset .off { margin-left: 1px; }
.matrix { height: 811px; margin: 0 17px 0 14px; background: #fff; border: solid #a0a0a0; border-width: 1px 0 0 1px; }
.matrix table { width: 822px; border-collapse: separate; border-spacing: 0; border: solid #000; border-width: 0 1px 2px 0; table-layout: fixed; line-height: 30px; }
.matrix th { font-weight: 400; background: #f0f0f0; border: 1px solid #a0a0a0; border-width: 0 1px 1px 0; height: 133px; }
.matrix th:first-child { width: 180px; }
.matrix .hot { background: #ffffde; }
.matrix .dim { background: #e2e2e2; }
.matrix td { position: relative; height: 298px; padding: 0; border: 1px solid #a0a0a0; border-width: 0 1px 1px 0; }
.matrix tr + tr th { height: 298px; }
.matrix td span { position: absolute; right: 6px; bottom: 3px; font-size: 17px; line-height: 22px; color: #555; }
.plot { width: 100%; height: 296px; outline: 2px solid #e6e6e6; outline-offset: -2px; }
.dots { stroke: #00f; stroke-width: 1; fill: none; shape-rendering: crispEdges; }
.coef { display: grid; grid-template-columns: 163px 125px 1fr; padding: 19px 100px 0 20px; height: 98px; align-items: start; }
.coef label { padding-top: 13px; }
.coef > input { height: 46px; margin-top: 5px; min-width: 0; padding-left: 2px; }
.slide input { appearance: none; display: block; width: 519px; height: 33px; padding: 0 10px 0 9px; border: 1px dotted #000; border-width: 0 1px 2px 1px; background: linear-gradient(#777 2px, #fff 2px) 9px 10px / 498px 4px no-repeat, repeating-linear-gradient(90deg, #000 0 1px, transparent 1px 24px) 18px bottom / 484px 3px no-repeat; }
.slide input::-webkit-slider-thumb { appearance: none; width: 16px; height: 28px; margin-bottom: 3px; background: linear-gradient(125deg, transparent 78%, #777 78%), linear-gradient(90deg, #fff 2px, #f2f2f2 2px 14px, #777 14px); clip-path: polygon(0 0, 100% 0, 100% 70%, 50% 100%, 0 70%); }
.scale { display: grid; grid-template-columns: 200px 144px auto; width: 540px; padding: 8px 0 0 8px; }
.scale span:nth-child(2) { text-align: center; }
.scale span:nth-child(3) { text-align: right; }
.buttons { display: flex; gap: 5px; align-items: center; margin-left: 10px; padding: 5px 12px 11px 3px; border-top: 1px solid #a0a0a0; box-shadow: inset 0 1px #fff; }
.buttons button { height: 56px; display: flex; align-items: center; justify-content: center; background: #e1e1e1; border: 1px solid #adadad; }
.buttons .sq { width: 55px; }
.buttons .picked { margin-left: 14px; background: #e5f1fc; border-color: #0078d7; }
.buttons .add { width: 247px; margin-left: 3px; }
.buttons .ok { width: 148px; margin-left: auto; border: 3px solid #0078d7; }
.buttons .cancel { width: 148px; }
.glyph { font: bold 17px "Open Sans", sans-serif; fill: #4a6078; }

.tip { position: absolute; left: 1697px; top: 500px; width: 284px; padding: 2px 0 4px; background: #ffffde; box-shadow: 0 6px 20px rgba(0,0,0,.45), 0 0 3px rgba(0,0,0,.5); font-size: 21px; line-height: 27px; }
.tip div { height: 70px; padding: 6px 0 0 13px; border: 1px solid #8e8e8e; }
.tip::before { content: ""; position: absolute; left: 1px; top: 43px; border: solid transparent; border-width: 0 10px 9px 0; border-bottom-color: #c4c4c4; }
.ink { position: absolute; left: 930px; top: 1220px; }
```
FILE: scatter.js
```
// Draws 1000 correlated samples as small plus marks in each plot.
let seed = 20181003;
function rnd() {
  seed = (seed * 1664525 + 1013904223) % 4294967296;
  return seed / 4294967296;
}
function normal() {
  return Math.sqrt(-2 * Math.log(1 - rnd())) * Math.cos(2 * Math.PI * rnd());
}
// Samples at the edge of the cloud.
const points = [[297, 18], [205, 27], [228, 44], [271, 42], [248, 51], [311, 55], [196, 57], [212, 62],
  [239, 60], [120, 79], [134, 91], [17, 172], [38, 190], [30, 222], [45, 206], [42, 252], [55, 271],
  [75, 268], [117, 280], [135, 290], [153, 264], [176, 262], [203, 255], [241, 259], [273, 242],
  [306, 212], [65, 129], [69, 132], [85, 137], [100, 129], [304, 70], [278, 65]];
while (points.length < 1000) {
  const a = normal();
  const b = 0.42 * a + 0.9 * normal();
  const x = 180 + 62 * a - 4 * (a * a - 1);
  const y = 172 - 38 * b - 4 * (b * b - 1);
  if (x > 45 && x < 302 && y > 72 && y < 250) points.push([Math.round(x), Math.round(y)]);
}
const d = points.map(([x, y]) => `M${x - 1} ${y + 0.5}h3M${x + 0.5} ${y - 1}v3`).join("");
document.querySelectorAll(".dots").forEach((p) => p.setAttribute("d", d));
```
